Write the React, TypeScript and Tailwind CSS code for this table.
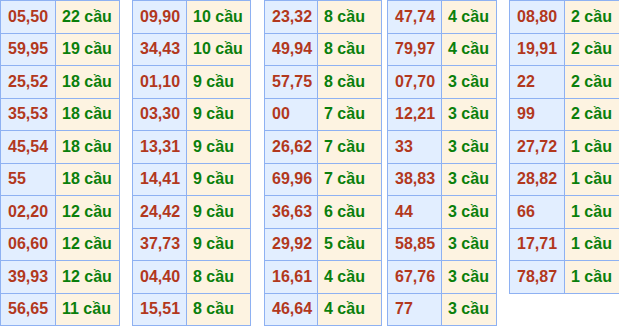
import React from 'react';

type Row = [string, number];

interface TableSpec {
    rows: Row[];
    numW: string;
    cntW: string;
    gap: string;
}

const tables: TableSpec[] = [
    {
        gap: 'ml-0',
        numW: 'w-[55px]',
        cntW: 'w-[64px]',
        rows: [
            ['05,50', 22], ['59,95', 19], ['25,52', 18], ['35,53', 18], ['45,54', 18],
            ['55', 18], ['02,20', 12], ['06,60', 12], ['39,93', 12], ['56,65', 11],
        ],
    },
    {
        gap: 'ml-[12px]',
        numW: 'w-[54px]',
        cntW: 'w-[64px]',
        rows: [
            ['09,90', 10], ['34,43', 10], ['01,10', 9], ['03,30', 9], ['13,31', 9],
            ['14,41', 9], ['24,42', 9], ['37,73', 9], ['04,40', 8], ['15,51', 8],
        ],
    },
    {
        gap: 'ml-[13px]',
        numW: 'w-[53px]',
        cntW: 'w-[64px]',
        rows: [
            ['23,32', 8], ['49,94', 8], ['57,75', 8], ['00', 7], ['26,62', 7],
            ['69,96', 7], ['36,63', 6], ['29,92', 5], ['16,61', 4], ['46,64', 4],
        ],
    },
    {
        gap: 'ml-[5px]',
        numW: 'w-[54px]',
        cntW: 'w-[55px]',
        rows: [
            ['47,74', 4], ['79,97', 4], ['07,70', 3], ['12,21', 3], ['33', 3],
            ['38,83', 3], ['44', 3], ['58,85', 3], ['67,76', 3], ['77', 3],
        ],
    },
    {
        gap: 'ml-[12px]',
        numW: 'w-[55px]',
        cntW: 'w-[55px]',
        rows: [
            ['08,80', 2], ['19,91', 2], ['22', 2], ['99', 2], ['27,72', 1],
            ['28,82', 1], ['66', 1], ['17,71', 1], ['78,87', 1],
        ],
    },
];

const CauTable: React.FC<{ spec: TableSpec }> = ({ spec }) => (
    <div className={`${spec.gap} shrink-0 flex flex-col border-r border-b border-[#8eb1f2]`}>
        {spec.rows.map(([pair, count]) => (
            <div key={pair} className="flex h-[32.5px] border-t border-[#8eb1f2]">
                <div className={`${spec.numW} border-l border-[#8eb1f2] bg-[#e2eeff] pl-[7px] flex items-center text-[#b2381d]`}>
                    {pair}
                </div>
                <div className={`${spec.cntW} border-l border-[#8eb1f2] bg-[#fdf3e1] pl-[6px] flex items-center text-[#0a7f0c]`}>
                    {count} cầu
                </div>
            </div>
        ))}
    </div>
);

export default function App() {
    return (
        <div className="w-[619px] h-[328px] overflow-hidden bg-white font-['Liberation_Sans',Arial,sans-serif] font-bold text-[16px] leading-none">
            <div className="flex items-start">
                {tables.map((t, i) => (
                    <CauTable key={i} spec={t} />
                ))}
            </div>
        </div>
    );
}
